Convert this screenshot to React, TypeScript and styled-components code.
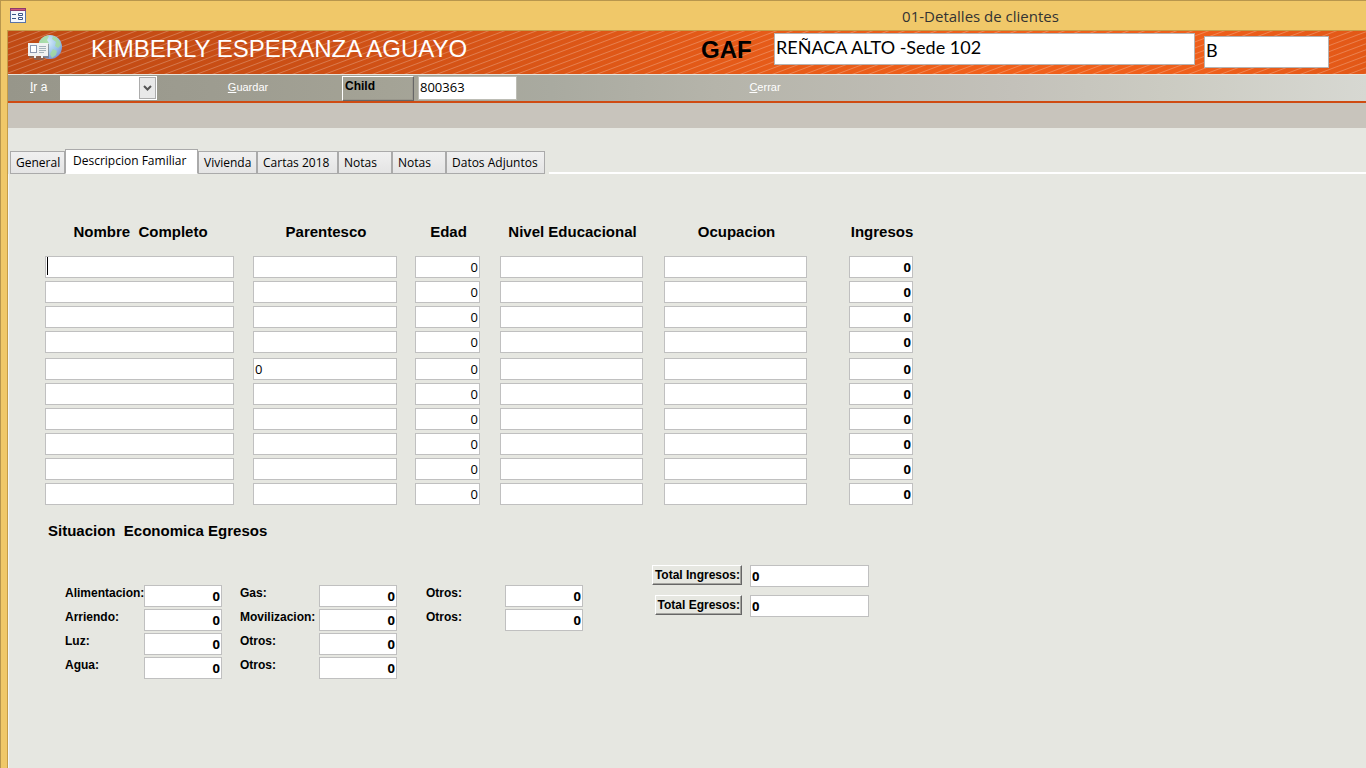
import React, { useState } from 'react';
import styled, { createGlobalStyle } from 'styled-components';

const ui = '"Open Sans", "Noto Sans", sans-serif';
const arial = '"Liberation Sans", Arial, sans-serif';

const GlobalStyle = createGlobalStyle`
  *, *::before, *::after { box-sizing: border-box; }
  body { margin: 0; background: #e6e7e1; color: #000; font-family: ${ui}; }
  input, button, select { font: inherit; color: inherit; margin: 0; border-radius: 0; outline: none; }
`;

const Window = styled.div`
  display: flex;
  flex-direction: column;
  min-height: 100vh;
  padding-left: 6px;
  background: #f0c869;
  border-top: 1px solid #b8964d;
  border-left: 1px solid #b8964d;
`;

const TitleBar = styled.div`
  display: flex;
  align-items: center;
  height: 30px;
  padding: 0 3px;
  border-bottom: 1px solid #c49c48;
`;

const Title = styled.div`
  flex: 1;
  padding-left: 572px;
  text-align: center;
  font-size: 15px;
  line-height: 20px;
  color: #333;
`;

const Form = styled.main`
  flex: 1;
  display: flex;
  flex-direction: column;
  border-left: 1px solid #c49c48;
  background: #e6e7e1;
`;

const Header = styled.header`
  position: relative;
  display: flex;
  align-items: flex-start;
  height: 44px;
  border-bottom: 1px solid #e8e4dc;
  background: linear-gradient(90deg, #c04a14 0%, #cc4f15 22%, #e05817 46%, #f0601b 72%, #ee5f1b 88%, #e25817 100%);
`;

const Stripes = styled.svg`
  position: absolute;
  inset: 0;
  width: 100%;
  height: 100%;
`;

const Logo = styled.svg`
  position: relative;
  flex: none;
  margin: 3px 0 0 20px;
`;

const Name = styled.h1`
  position: relative;
  flex: none;
  width: 610px;
  margin: 4px 0 0 27px;
  font: 24px/28px ${arial};
  color: #fff;
`;

const GafLabel = styled.label`
  position: relative;
  flex: none;
  width: 73px;
  margin-top: 5px;
  font: bold 24px/28px ${arial};
`;

const HeaderInput = styled.input<{ $w: number; $top: number }>`
  position: relative;
  flex: 0 1 ${p => p.$w}px;
  min-width: 0;
  height: 32px;
  margin: ${p => p.$top}px 9px 0 0;
  padding: 0 1px 4px;
  border: 1px solid #b4b4b4;
  background: #fff;
  font-family: Lato, sans-serif;
  font-size: 18px;
`;

const Toolbar = styled.div`
  display: flex;
  align-items: center;
  height: 28px;
  border-bottom: 2px solid #cf4b12;
  background: linear-gradient(90deg, #97968a 0%, #9d9c90 15%, #a4a396 28%, #a9aaa0 40%, #b5b4aa 52%, #c3c1ba 74%, #cbcbc2 85%, #d7d8d2 100%);
`;

const GoLabel = styled.label`
  flex: none;
  align-self: flex-start;
  width: 52px;
  padding-left: 22px;
  font: 12px/24px ${arial};
  color: #fff;
`;

const Combo = styled.div`
  flex: none;
  display: grid;
  width: 97px;
  height: 24px;
  margin-right: 66px;
  padding: 1px;
  background: #fff;
  & > * { grid-area: 1 / 1; }
`;

const ComboSelect = styled.select`
  appearance: none;
  border: 0;
  background: transparent;
  font-size: 12px;
`;

const ComboArrow = styled.svg`
  justify-self: end;
  pointer-events: none;
`;

const Command = styled.button<{ $w: number; $right: number }>`
  flex: none;
  align-self: flex-start;
  width: ${p => p.$w}px;
  margin-right: ${p => p.$right}px;
  padding: 0;
  border: 0;
  background: none;
  color: #fff;
  font: 11px/24px ${arial};
`;

const ChildLabel = styled.label`
  flex: none;
  width: 72px;
  height: 25px;
  margin-right: 4px;
  padding: 0 2px;
  border: solid;
  border-width: 1px;
  border-color: #fff #666 #666 #fff;
  box-shadow: inset -1px -1px #99978c;
  font: bold 12px/18px ${arial};
`;

const CodeInput = styled.input`
  flex: none;
  width: 99px;
  height: 24px;
  margin-right: 208px;
  padding: 0 1px 2px;
  border: 1px solid #bdbdb5;
  background: #fff;
  font-size: 13px;
`;

const Band = styled.div`
  height: 25px;
  background: #c8c4bc;
`;

const TabBar = styled.div`
  display: flex;
  align-items: flex-end;
  height: 26px;
  margin-top: 20px;
  padding-left: 2px;
`;

const Tab = styled.button<{ $w: number; $on: boolean }>`
  flex: none;
  width: ${p => p.$w}px;
  height: ${p => (p.$on ? 25 : 23)}px;
  padding: 0 0 ${p => (p.$on ? 2 : 0)}px ${p => (p.$on ? 7 : 5)}px;
  border: 1px solid #aaa;
  border-bottom-color: ${p => (p.$on ? '#fff' : '#aaa')};
  background: ${p => (p.$on ? '#fff' : 'linear-gradient(#f0f0f0, #e4e4e4)')};
  font-size: 12px;
  line-height: 20px;
  text-align: left;
  white-space: nowrap;
`;

const TabRule = styled.div`
  flex: 1;
  height: 2px;
  margin-left: 4px;
  background: #fff;
`;

const Page = styled.section`
  flex: 1;
  padding: 47px 20px 40px 36px;
  border-left: 1px solid #f6f6f4;
`;

const FamilyTable = styled.table`
  border-collapse: collapse;
  table-layout: fixed;
  width: 882px;
`;

const Head = styled.th<{ $w: number; $gap: number }>`
  width: ${p => p.$w + p.$gap}px;
  height: 35px;
  padding: 0 ${p => p.$gap - 2}px 0 0;
  vertical-align: top;
  font: bold 15px/22px ${arial};
  white-space: pre;
`;

const Group = styled.tbody`
  & + & > tr:first-child > td { padding-top: 2px; }
`;

const Cell = styled.td<{ $gap: number }>`
  padding: 0 ${p => p.$gap}px 3px 0;
  font-size: 0;
`;

const Field = styled.input<{ $right?: boolean; $bold?: boolean }>`
  display: block;
  width: 100%;
  height: 22px;
  padding: 0 1px;
  border: 1px solid #c0c0c0;
  background: #fff;
  font-family: ${ui};
  font-size: 13px;
  font-weight: ${p => (p.$bold ? 700 : 400)};
  text-align: ${p => (p.$right ? 'right' : 'left')};

  /* steady caret bar while the empty field has focus */
  &:focus[value=''] {
    caret-color: transparent;
    background: linear-gradient(#000, #000) 1px 0 / 1px 18px no-repeat #fff;
  }
`;

const SectionTitle = styled.h2`
  margin: 12px 0 0 3px;
  font: bold 15px/22px ${arial};
  white-space: pre;
`;

const Summary = styled.div`
  display: flex;
  align-items: flex-start;
  margin-top: 23px;
`;

const Expenses = styled.div`
  display: grid;
  grid-template-columns: 79px 78px 18px 79px 78px 29px 79px 78px;
  grid-template-rows: repeat(4, 22px);
  row-gap: 2px;
  margin: 20px 70px 0 20px;
`;

const ExpenseLabel = styled.label<{ $col: number; $row: number }>`
  grid-column: ${p => p.$col};
  grid-row: ${p => p.$row};
  font: bold 12px/16px ${arial};
`;

const ExpenseField = styled(Field)<{ $col: number; $row: number }>`
  grid-column: ${p => p.$col};
  grid-row: ${p => p.$row};
`;

const Totals = styled.div`
  display: grid;
  grid-template-columns: 89px 119px;
  column-gap: 8px;
  row-gap: 8px;
  justify-items: end;
`;

const TotalLabel = styled.label`
  height: 20px;
  padding: 0 1px 0 2px;
  border: 1px solid;
  border-color: #fff #666 #666 #fff;
  box-shadow: inset -1px -1px #a5a5a0;
  font: bold 12px/18px ${arial};
  white-space: nowrap;
`;

const columns = [
  { title: 'Nombre  Completo', w: 189, gap: 19 },
  { title: 'Parentesco', w: 144, gap: 18 },
  { title: 'Edad', w: 65, gap: 20, right: true },
  { title: 'Nivel Educacional', w: 143, gap: 21 },
  { title: 'Ocupacion', w: 143, gap: 42 },
  { title: 'Ingresos', w: 64, gap: 14, right: true, bold: true },
];

const blank = ['', '', '0', '', '', '0'];
const groups = [
  [blank, blank, blank, blank],
  [['', '0', '0', '', '', '0'], blank, blank, blank, blank, blank],
];

const expenses = [
  ['Alimentacion:', 'Arriendo:', 'Luz:', 'Agua:'],
  ['Gas:', 'Movilizacion:', 'Otros:', 'Otros:'],
  ['Otros:', 'Otros:'],
];

const tabs: [string, number][] = [
  ['General', 55],
  ['Descripcion Familiar', 133],
  ['Vivienda', 59],
  ['Cartas 2018', 81],
  ['Notas', 54],
  ['Notas', 54],
  ['Datos Adjuntos', 99],
];

const FormIcon = () => (
  <svg width="16" height="15" viewBox="0 0 16 15" aria-hidden="true">
    <rect x=".5" y=".5" width="15" height="14" fill="#f5f8fd" stroke="#5a74a8" />
    <rect width="16" height="3" fill="#8c3c6c" />
    <rect x="1" y="1" width="14" height="1" fill="#d0587c" />
    <path d="M2 6.500h4M2 10.500h4" stroke="#3a5688" />
    <path d="M8.500 5.500h4v2h-4zM8.500 9.500h4v2h-4z" fill="#fff" stroke="#3a5688" />
  </svg>
);

const GlobeCard = () => (
  <Logo width="36" height="28" viewBox="0 0 36 28" aria-hidden="true">
    <defs>
      <radialGradient id="sea" cx=".4" cy=".3" r=".8">
        <stop offset="0" stopColor="#d8eefa" />
        <stop offset=".6" stopColor="#96c0e8" />
        <stop offset="1" stopColor="#7484cc" />
      </radialGradient>
    </defs>
    <circle cx="22" cy="13" r="12" fill="url(#sea)" />
    <path d="M11 9c2-5 6-8 10-7l-2 4 2 3-4 3-2-1-2 3-3 2zM25 2c4 1 7 5 8 9l-3 3-3-2 1-4-4-3zM25 15l4 2-1 4-4 3-2-4z" fill="#a4dc98" opacity=".8" />
    <path d="M1 10h20v14h-5v2H6v-2H1z" fill="#6c6c6c" opacity=".6" />
    <path d="M0 9h20v13h-5v2h-2v-2H8v2H6v-2H0z" fill="#f0f2f2" />
    <rect x="2.500" y="11.500" width="6" height="7" fill="#fff" stroke="#8c98b0" />
    <path d="M11 12.500h7M11 14.500h7M11 16.500h7M11 18.500h5" stroke="#a4b2ba" />
  </Logo>
);

export default function App() {
  const [active, setActive] = useState(1);
  return (
    <>
      <GlobalStyle />
      <Window>
        <TitleBar>
          <FormIcon />
          <Title>01-Detalles de clientes</Title>
        </TitleBar>
        <Form>
          <Header>
            <Stripes aria-hidden="true">
              <defs>
                <pattern id="hatch" width="16" height="6" patternUnits="userSpaceOnUse">
                  <path d="M-16 12L32 -6M-2 .75L2 -.75M14 6.750L18 5.250" stroke="#fff" strokeOpacity=".24" />
                </pattern>
              </defs>
              <rect width="100%" height="100%" fill="url(#hatch)" />
            </Stripes>
            <GlobeCard />
            <Name>KIMBERLY ESPERANZA AGUAYO</Name>
            <GafLabel htmlFor="gaf">GAF</GafLabel>
            <HeaderInput id="gaf" $w={421} $top={2} defaultValue="REÑACA ALTO -Sede 102" />
            <HeaderInput aria-label="Grupo" $w={125} $top={5} defaultValue="B" />
          </Header>
          <Toolbar>
            <GoLabel htmlFor="go"><u>I</u>r a</GoLabel>
            <Combo>
              <ComboSelect id="go"><option></option></ComboSelect>
              <ComboArrow width="17" height="22" viewBox="0 0 17 22" aria-hidden="true">
                <rect x=".5" y=".5" width="16" height="21" fill="#e9e9e9" stroke="#acacac" />
                <path d="M5 9l3.500 3.500L12 9" fill="none" stroke="#555" strokeWidth="2" />
              </ComboArrow>
            </Combo>
            <Command $w={50} $right={69}><u>G</u>uardar</Command>
            <ChildLabel htmlFor="child">Child</ChildLabel>
            <CodeInput id="child" defaultValue="800363" />
            <Command $w={80} $right={0}><u>C</u>errar</Command>
          </Toolbar>
          <Band />
          <TabBar role="tablist">
            {tabs.map(([label, w], i) => (
              <Tab key={i} role="tab" aria-selected={i === active} $w={w} $on={i === active} onClick={() => setActive(i)}>
                {label}
              </Tab>
            ))}
            <TabRule />
          </TabBar>
          <Page>
            <FamilyTable>
              <thead>
                <tr>
                  {columns.map(c => (
                    <Head key={c.title} $w={c.w} $gap={c.gap}>{c.title}</Head>
                  ))}
                </tr>
              </thead>
              {groups.map((rows, g) => (
                <Group key={g}>
                  {rows.map((row, r) => (
                    <tr key={r}>
                      {row.map((v, i) => (
                        <Cell key={i} $gap={columns[i].gap}>
                          <Field
                            aria-label={columns[i].title}
                            autoFocus={g + r + i === 0}
                            defaultValue={v}
                            $right={columns[i].right}
                            $bold={columns[i].bold}
                          />
                        </Cell>
                      ))}
                    </tr>
                  ))}
                </Group>
              ))}
            </FamilyTable>
            <SectionTitle>Situacion  Economica Egresos</SectionTitle>
            <Summary>
              <Expenses>
                {expenses.map((labels, c) =>
                  labels.map((label, r) => (
                    <React.Fragment key={`${c}-${r}`}>
                      <ExpenseLabel htmlFor={`e${c}${r}`} $col={c * 3 + 1} $row={r + 1}>{label}</ExpenseLabel>
                      <ExpenseField id={`e${c}${r}`} $col={c * 3 + 2} $row={r + 1} $right $bold defaultValue="0" />
                    </React.Fragment>
                  ))
                )}
              </Expenses>
              <Totals>
                <TotalLabel htmlFor="ti">Total Ingresos:</TotalLabel>
                <Field id="ti" $bold defaultValue="0" />
                <TotalLabel htmlFor="te">Total Egresos:</TotalLabel>
                <Field id="te" $bold defaultValue="0" />
              </Totals>
            </Summary>
          </Page>
        </Form>
      </Window>
    </>
  );
}
